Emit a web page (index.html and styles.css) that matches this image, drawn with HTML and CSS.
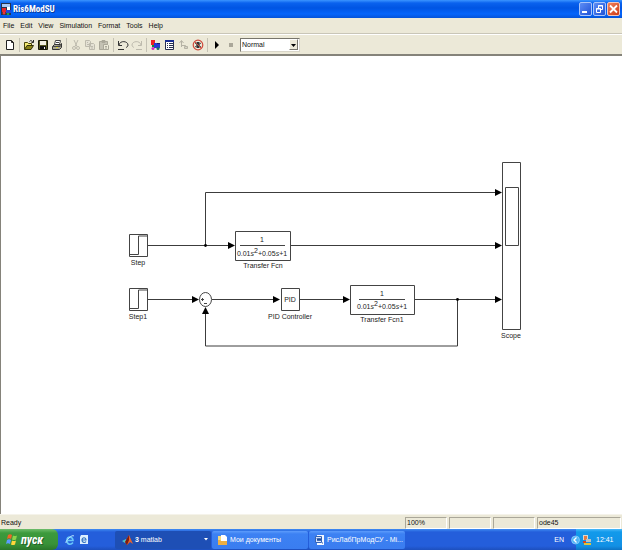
FILE: index.html
```html
<!DOCTYPE html>
<html lang="en">
<head>
<meta charset="utf-8">
<title>Ris6ModSU</title>
<link rel="stylesheet" href="styles.css">
</head>
<body>
<header class="titlebar">
  <svg class="app-icon" width="11" height="13" viewBox="0 0 11 13"><path fill="#26334d" d="M0 0h10v12H0z"/><path fill="#a9c8f4" d="M1 1h8v3H1z"/><path fill="#e4252b" d="M1 5h4v4H1z"/><path fill="#fff" d="M6 4h3v3H6z"/><path fill="#2547d8" d="M5 7h5v3H5z"/><circle cx="3" cy="10" r="1.5" fill="#e33"/><circle cx="7" cy="11" r="1.3" fill="#26a144"/></svg>
  <h1>Ris6ModSU</h1>
  <div class="window-buttons">
    <button class="win" aria-label="Minimize"><svg width="11" height="12"><path fill="#fff" d="M2 8h5v2H2z"/></svg></button>
    <button class="win" aria-label="Restore"><svg width="11" height="12" fill="none" stroke="#fff"><path d="M4.500 5V2.500h4v4H7M4 3h5M2.500 5.500h4v4h-4zM2 6h5"/></svg></button>
    <button class="win close" aria-label="Close"><svg width="11" height="12"><path stroke="#fff" stroke-width="1.800" d="M2 2.500l7 7M9 2.500l-7 7"/></svg></button>
  </div>
</header>
<nav class="menubar">
  <button>File</button><button>Edit</button><button>View</button><button>Simulation</button><button>Format</button><button>Tools</button><button>Help</button>
</nav>
<div class="toolbar">
  <button aria-label="New"><svg viewBox="0 0 14 14"><path fill="#fff" stroke="#222" d="M3.500 2.500h5l2 2v7h-7z"/><path fill="none" stroke="#222" d="M8.500 2.500v2h2"/></svg></button>
  <i></i>
  <button aria-label="Open"><svg viewBox="0 0 14 14"><path fill="#f5eb72" stroke="#4a4508" d="M2.500 11V4.500h3l1 1h3V7"/><path fill="#8c8417" stroke="#333006" d="M2.500 11.500L5 7.500h6.500l-2.500 4z"/><path fill="none" stroke="#222" d="M7.500 3.500c1-1.500 2.500-1 3 .500M11.500 2v2.500H9.500"/></svg></button>
  <button aria-label="Save"><svg viewBox="0 0 14 14"><path fill="#55561f" stroke="#161606" d="M2.500 2.500h9v9h-9z"/><path fill="#f2f0e2" d="M4 3h6v4H4z"/><path fill="#111" d="M4 8h6v3H4z"/><path fill="#eee" d="M8 9h1v2H8z"/></svg></button>
  <button aria-label="Print"><svg viewBox="0 0 14 14"><path fill="#fff" stroke="#444" d="M4.500 6.500l1-4h5l-1 4z"/><path fill="#aaa894" stroke="#333" d="M2.500 8.500l2-2h6l1-1v4l-2 2h-7z"/><path stroke="#444" d="M3 8.500h7l1-1M6 4.500h3"/><path fill="#dfd334" d="M6 9h2v1H6z"/></svg></button>
  <i></i>
  <button aria-label="Cut" disabled><svg viewBox="0 0 14 14" fill="none" stroke="#bdbaad"><path d="M5 2l3 6.500M9 2L6 8.500"/><circle cx="5" cy="10" r="1.500"/><circle cx="9" cy="10" r="1.500"/></svg></button>
  <button aria-label="Copy" disabled><svg viewBox="0 0 14 14" fill="#e4e1d4" stroke="#bdbaad"><path d="M2.500 2.500h4l1 1v5h-5zM6.500 5.500h4l1 1v5h-5zM8 8.500h2M8 10h2M4 4.500h1M4 6.500h2"/></svg></button>
  <button aria-label="Paste" disabled><svg viewBox="0 0 14 14" fill="#c4c1b3" stroke="#aaa799"><path d="M2.500 3.500h8v8h-8zM5 2.500h3v2H5z"/><path fill="#ece9d8" d="M6.500 6.500h4l1 1v4h-5zM8 8.500h2M8 10h2"/></svg></button>
  <i></i>
  <button aria-label="Undo"><svg viewBox="0 0 14 14" fill="none" stroke="#333"><path d="M3 7c1-5 9-4 9 0 0 1.500-1 2-2 2.500M2.500 3v4.500H6M2 11.500h6"/></svg></button>
  <button aria-label="Redo" disabled><svg viewBox="0 0 14 14" fill="none" stroke="#bdbaad"><path d="M11 7C10 2 2 3 2 7c0 1.500 1 2 2 2.500M11.500 3v4.500H8M6 11.500h6"/></svg></button>
  <i></i>
  <button aria-label="Library browser"><svg viewBox="0 0 14 14"><path fill="#ed2024" d="M2 2h4v5H2z"/><path fill="#098a38" d="M3 7h3v2H3z"/><path fill="#2636d6" d="M5 5h6v5H5z"/><path fill="#15206f" d="M8 5h3v1H8z"/><circle cx="4" cy="10.500" r="1.500" fill="#d428be"/><circle cx="9" cy="10.500" r="1.500" fill="#176f65"/></svg></button>
  <button aria-label="Model explorer"><svg viewBox="0 0 14 14"><path fill="#fff" stroke="#263050" d="M2.500 2.500h8v9h-8z"/><path fill="#172d94" d="M2 2h9v2H2z"/><path stroke="#263050" d="M4 5.500h1M6 5.500h4M4 7.500h1M6 7.500h4M4 9.500h1M6 9.500h4"/></svg></button>
  <button aria-label="Parent system" disabled><svg viewBox="0 0 14 14" fill="none" stroke="#b5b2a5"><path d="M4.500 9V3M2.500 5l2-2.500 2 2.500M4.500 7.500h4v2"/><path fill="#d5d2c4" d="M7.500 8.500h3v2h-3z"/></svg></button>
  <button aria-label="Debug"><svg viewBox="0 0 14 14" fill="none"><path fill="#333" d="M5.500 4h3v6h-3z"/><path stroke="#444" d="M4 5l6 4M4 9l6-4"/><circle cx="7" cy="7" r="4.800" stroke="#cf493b" stroke-width="1.200"/><path stroke="#cf493b" d="M4 4l6 6"/></svg></button>
  <i></i>
  <button aria-label="Start simulation"><svg viewBox="0 0 14 14"><path d="M5 3l4 4-4 4z"/></svg></button>
  <button aria-label="Stop simulation" disabled><svg viewBox="0 0 14 14"><path fill="#aaa799" d="M5 5h4v4H5z"/></svg></button>
  <div class="mode">
    <select aria-label="Simulation mode"><option>Normal</option><option>Accelerator</option></select>
    <svg width="9" height="11"><path d="M1 4h5L3.500 7z"/></svg>
  </div>
</div>
<main class="canvas">
  <svg class="model" role="img" aria-label="Block diagram">
    <defs><path id="head" d="M0 0l-7-3.500v7z"/></defs>
    <g class="wires">
      <path d="M148 189.500h82M205.500 189.500v-53H498M291 189.500h207M148 243.500h47M212 243.500h63M299 243.500h47M415 243.500h83M457.500 243.500v46.500H205.500V256"/>
    </g>
    <g>
      <use href="#head" x="235" y="189.500"/><use href="#head" x="502" y="136.500"/><use href="#head" x="502" y="189.500"/>
      <use href="#head" x="199" y="243.500"/><use href="#head" x="280" y="243.500"/><use href="#head" x="350" y="243.500"/><use href="#head" x="502" y="243.500"/>
      <path d="M205.500 251l-3.500 7h7z"/><circle cx="205.500" cy="189.500" r="1.400"/><circle cx="457.500" cy="243.500" r="1.400"/>
    </g>
    <g class="blocks">
      <path d="M129.500 178.500h18v22h-18zM129.500 232.500h18v22h-18zM235.500 175.500h55v29h-55zM281.500 232.500h18v22h-18zM350.500 229.500h64v29h-64zM502.500 106.500h18v167h-18zM505.500 131.500h13v58h-13z"/>
      <ellipse cx="205.500" cy="243.500" rx="6" ry="7"/>
      <path d="M130 198.500h8.500v-18.500h9M130 252.500h8.500v-18.500h9M240 189.500h45M359 243.500h46M201 243.500h3M202.500 242v3M204 247.500h3"/>
    </g>
    <g class="labels">
      <text x="138" y="209">Step</text><text x="138" y="263">Step1</text>
      <text x="263" y="212">Transfer Fcn</text><text x="382" y="266">Transfer Fcn1</text>
      <text x="290" y="263">PID Controller</text><text x="511" y="282">Scope</text>
      <text x="290" y="246">PID</text>
      <text x="262" y="186">1</text><text x="382" y="240">1</text>
      <text x="262" y="200">0.01<tspan class="var">s</tspan><tspan dy="-3">2</tspan><tspan dy="3">+0.05</tspan><tspan class="var">s</tspan>+1</text>
      <text x="382" y="253">0.01<tspan class="var">s</tspan><tspan dy="-3">2</tspan><tspan dy="3">+0.05</tspan><tspan class="var">s</tspan>+1</text>
    </g>
  </svg>
</main>
<footer class="status"><span class="ready">Ready</span><span class="cell">100%</span><span class="cell"></span><span class="cell"></span><span class="cell solver">ode45</span></footer>
<div class="taskbar">
  <button class="start"><svg width="12" height="13" viewBox="0 0 12 13"><path fill="#f06428" d="M2 2q2-1.500 4 0L5 6Q3 4.500 1 6z"/><path fill="#8bd44a" d="M7 2.500q2 1 4 0L10 6.500q-2 1-4 0z"/><path fill="#5b9bff" d="M1 7q2-1.500 4 0l-1 4q-2-1.500-4 0z"/><path fill="#ffd53b" d="M6 7.500q2 1 4 0l-1 4q-2 1-4 0z"/></svg>пуск</button>
  <div class="quick">
    <button aria-label="Internet Explorer"><svg width="10" height="12" viewBox="0 0 10 12" fill="none"><path stroke="#69c7fa" stroke-width="1.600" d="M2 6.500h6C8 2 2 2 2 6.500S6 11 8 8.500"/><path stroke="#b9e5ff" d="M1 9C0 7 7 0 9 2"/></svg></button>
    <button aria-label="Desktop"><svg width="10" height="12" viewBox="0 0 10 12" fill="none"><path fill="#dcefff" d="M2 1h7v9H1V3z"/><path stroke="#3674bf" stroke-width="1.200" d="M3 6h4C7 3 3 3 3 6s3 3 4 1.500"/></svg></button>
  </div>
  <button class="task active"><svg width="11" height="12" viewBox="0 0 11 12"><path fill="#4cc2c8" d="M0 7l4-2 1 3-2 1z"/><path fill="#e8632b" d="M3 8l4-7 4 9-3-2-3 3z"/><path fill="#7c1c13" d="M3 8l4-7v5l-2 5z"/></svg><span><b>3</b> matlab</span><svg class="more" width="5" height="4"><path fill="#fff" d="M0 0h4L2 2.500z"/></svg></button>
  <button class="task"><svg width="11" height="12" viewBox="0 0 11 12"><path fill="#f3d77c" d="M1 2h4l1 1h4v8H1z"/><path fill="#fff" d="M4 1h4l2 2v5H4z"/><path fill="#edae43" d="M1 6h2l1 1h6v4H1z"/></svg><span>Мои документы</span></button>
  <button class="task"><svg width="11" height="12" viewBox="0 0 11 12"><path fill="#f4f8ff" d="M3 1h7v10H3z"/><path fill="#d5e4ff" stroke="#3463b6" d="M1.500 2.500h6v6h-6z"/><path fill="none" stroke="#1d4d9e" d="M3 4l1 3 1-3 1 3 1-3M8 9h1"/></svg><span>РисЛабПрМодСУ - Mi...</span></button>
  <span class="lang">EN</span>
  <div class="tray">
    <button class="chevron" aria-label="Show hidden icons"><svg width="9" height="10" viewBox="0 0 9 10"><circle cx="4.500" cy="5" r="4" fill="#4fb3f6" stroke="#a8ddff" stroke-width=".600"/><path fill="none" stroke="#fff" stroke-width="1.300" d="M5.500 2.500L3 5l2.500 2.500"/></svg></button>
    <svg width="10" height="12" viewBox="0 0 10 12"><path fill="#d8d9d0" d="M1 1h5v5H1z"/><path fill="#e37b43" d="M2 2h3v4H2z"/><path fill="#b6c2c8" d="M4 5h5v3H4z"/><path fill="#e1c338" d="M2 9h7v2H2z"/><path fill="#d04628" d="M1 7h3v2H1z"/></svg>
    <time>12:41</time>
  </div>
</div>
</body>
</html>
```
FILE: styles.css
```css
* { box-sizing: border-box; }
html, body { height: 100%; }
body {
  margin: 0;
  display: flex;
  flex-direction: column;
  background: #ece9d8;
  color: #111;
  font: 7px/10px "Liberation Sans", sans-serif;
  overflow: hidden;
}
button {
  margin: 0;
  padding: 0;
  border: 0;
  background: none;
  color: inherit;
  font: inherit;
}
svg { display: block; flex: none; }

.titlebar {
  display: flex;
  align-items: center;
  height: 18px;
  padding: 0 2px 0 1px;
  background: linear-gradient(#3b95ff 0, #0a62ee 3px, #0055e3 8px, #0565fb 14px, #0453d8 18px);
}
.titlebar h1 {
  margin: 0 auto 0 1px;
  color: #fff;
  font: bold 9px/14px "Roboto Condensed", Roboto, sans-serif;
  text-shadow: 1px 1px #0a3c9c;
}
.window-buttons { display: flex; gap: 1px; }
.win {
  width: 13px;
  height: 14px;
  border: 1px solid #a9c5fa;
  border-radius: 2px;
  background: linear-gradient(135deg, #5d8df5, #2153d6);
}
.win.close { background: linear-gradient(135deg, #f0835f, #cf3b14); border-color: #f3c6ba; }

.menubar {
  display: flex;
  align-items: center;
  gap: 6px;
  height: 16px;
  padding: 0 3px;
  border-bottom: 1px solid #c9c6b8;
}
.toolbar {
  display: flex;
  align-items: center;
  height: 22px;
  padding: 0 3px;
  border-top: 1px solid #fff;
  border-bottom: 2px solid #85837a;
}
.toolbar button, .toolbar button svg { width: 14px; height: 14px; }
.toolbar i { width: 1px; height: 14px; margin: 0 2px; background: #c5c2b4; }
.mode {
  display: flex;
  align-items: center;
  width: 60px;
  height: 14px;
  margin-left: 2px;
  padding-right: 1px;
  border: 1px solid;
  border-color: #77756c #d8d5c8 #d8d5c8 #77756c;
  background: #fff;
}
.mode select {
  appearance: none;
  flex: 1;
  min-width: 0;
  height: 12px;
  padding: 0 1px;
  border: 0;
  background: none;
  color: inherit;
  font: inherit;
}
.mode svg { background: #ece9d8; border: 1px solid; border-color: #fff #77756c #77756c #fff; }

.canvas {
  flex: 1;
  min-height: 0;
  border-left: 1px solid #85837a;
  background: #fff;
}
.model { width: 100%; height: 100%; margin-left: -1px; }
.wires, .blocks { fill: none; stroke: #3c3c3c; stroke-width: 1; }
.blocks { stroke: #444; }
.labels { fill: #222; font: 7px "Liberation Sans", sans-serif; text-anchor: middle; }
.var { font-style: italic; }

.status {
  display: flex;
  align-items: center;
  gap: 2px;
  height: 15px;
  padding: 1px 1px 0;
  border-top: 1px solid #f5f3ea;
}
.ready { flex: 1; }
.cell {
  width: 42px;
  height: 12px;
  padding-left: 1px;
  border: 1px solid;
  border-color: #aaa799 #fff #fff #aaa799;
}
.solver { width: 84px; }

.taskbar {
  display: flex;
  align-items: stretch;
  height: 21px;
  background: linear-gradient(#3f8cf3 0, #245edb 3px, #245edb 17px, #1d4fbd 21px);
  color: #fff;
}
.start {
  display: flex;
  align-items: center;
  gap: 3px;
  width: 58px;
  padding-left: 6px;
  border-radius: 0 6px 6px 0;
  background: linear-gradient(#6fbd6c 0, #3c9a3c 4px, #389238 15px, #2a762a 21px);
  font: italic bold 12px/16px "Roboto Condensed", Roboto, sans-serif;
  text-shadow: 1px 1px #24602a;
}
.quick { display: flex; align-items: center; gap: 4px; width: 57px; padding-left: 7px; }
.task {
  display: flex;
  align-items: center;
  gap: 2px;
  width: 96px;
  margin: 2px 1px 1px 0;
  padding: 0 5px;
  border-radius: 2px;
  background: linear-gradient(#5c9bfb, #3c81f3 3px, #3a7df0);
  white-space: nowrap;
}
.task.active { background: #1e4fb5; padding: 0 2px 0 7px; }
.more { margin-left: auto; }
.lang { margin-left: auto; padding-right: 12px; line-height: 21px; }
.tray {
  display: flex;
  align-items: center;
  gap: 2px;
  width: 46px;
  background: linear-gradient(#4bb9f9 0, #129aeb 3px, #1290e5 17px, #0c73c4 21px);
}
.chevron { margin-left: -5px; }
.tray time { margin-left: 2px; }
```
